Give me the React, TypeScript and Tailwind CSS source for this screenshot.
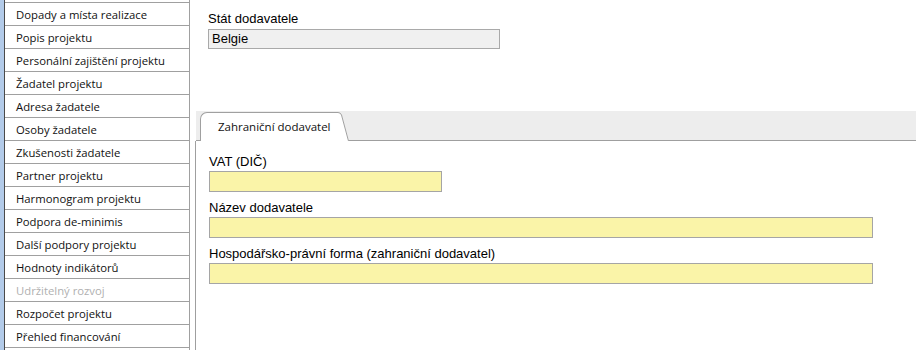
import React from "react";

const navItems = [
  { label: "Dopady a místa realizace" },
  { label: "Popis projektu" },
  { label: "Personální zajištění projektu" },
  { label: "Žadatel projektu" },
  { label: "Adresa žadatele" },
  { label: "Osoby žadatele" },
  { label: "Zkušenosti žadatele" },
  { label: "Partner projektu" },
  { label: "Harmonogram projektu" },
  { label: "Podpora de-minimis" },
  { label: "Další podpory projektu" },
  { label: "Hodnoty indikátorů" },
  { label: "Udržitelný rozvoj", disabled: true },
  { label: "Rozpočet projektu" },
  { label: "Přehled financování" },
];

const Field = ({ label, width }: { label: string; width: string }) => (
  <div className="flex flex-col">
    <span className="text-[13px] leading-[15px] text-black">{label}</span>
    <div className={`mt-[2px] h-[21px] border border-[#a5a5a5] bg-[#faf4a8] ${width}`} />
  </div>
);

export default function App() {
  return (
    <div className="flex h-[350px] w-[916px] overflow-hidden bg-white font-['Liberation_Sans',Arial,sans-serif]">
      {/* side navigation */}
      <div className="flex h-full w-[190px] shrink-0">
        <div className="h-full w-[4px] bg-[#b3cbe9]" />
        <div className="flex h-full w-[186px] flex-col border-l border-r border-[#4a4a4a] border-r-[#a0a0a0] font-['Open_Sans',sans-serif] text-[11.3px]">
          <div className="h-[3px] shrink-0 border-b border-[#a0a0a0]" />
          {navItems.map((item) => (
            <div
              key={item.label}
              className={`flex h-[23px] shrink-0 items-center border-b border-[#a0a0a0] pl-[11px] pt-[2px] ${
                item.disabled ? "text-[#b0b0b0]" : "text-[#111]"
              }`}
            >
              {item.label}
            </div>
          ))}
        </div>
      </div>

      {/* content */}
      <div className="flex flex-1 flex-col">
        <div className="h-[111px] shrink-0 pl-[18px] pt-[11px]">
          <div className="text-[13px] leading-[15px] text-black">Stát dodavatele</div>
          <div className="mt-[3px] flex h-[20px] w-[292px] items-center border border-[#a9a9a9] bg-[#f0f0f0] pl-[3px] text-[13px] text-black">
            Belgie
          </div>
        </div>

        {/* tab strip */}
        <div className="ml-[6px] flex h-[30px] shrink-0 items-end border-b border-[#9f9f9f] bg-[#ededed] pl-[4px]">
          <div className="-mb-px flex h-[29px] items-stretch">
            <div className="flex items-center rounded-tl-[7px] border-l border-t border-[#a0a0a0] bg-white pl-[17px] pr-[4px] font-['Open_Sans',sans-serif] text-[11.5px] text-[#111]">
              Zahraniční dodavatel
            </div>
            <svg width="14" height="29" viewBox="0 0 14 29" className="block">
              <path d="M0 0.5 H3 Q5.5 0.5 6.5 3 L14 29 H0 Z" fill="#fff" />
              <path d="M0 0.5 H3 Q5.5 0.5 6.5 3 L13.5 29" fill="none" stroke="#a0a0a0" strokeWidth="1" />
            </svg>
          </div>
        </div>

        {/* tab panel */}
        <div className="ml-[5px] flex flex-1 flex-col gap-[8px] border-l border-[#9f9f9f] pl-[13px] pt-[13px]">
          <Field label="VAT (DIČ)" width="w-[233px]" />
          <Field label="Název dodavatele" width="w-[664px]" />
          <Field label="Hospodářsko-právní forma (zahraniční dodavatel)" width="w-[664px]" />
        </div>
      </div>
    </div>
  );
}
